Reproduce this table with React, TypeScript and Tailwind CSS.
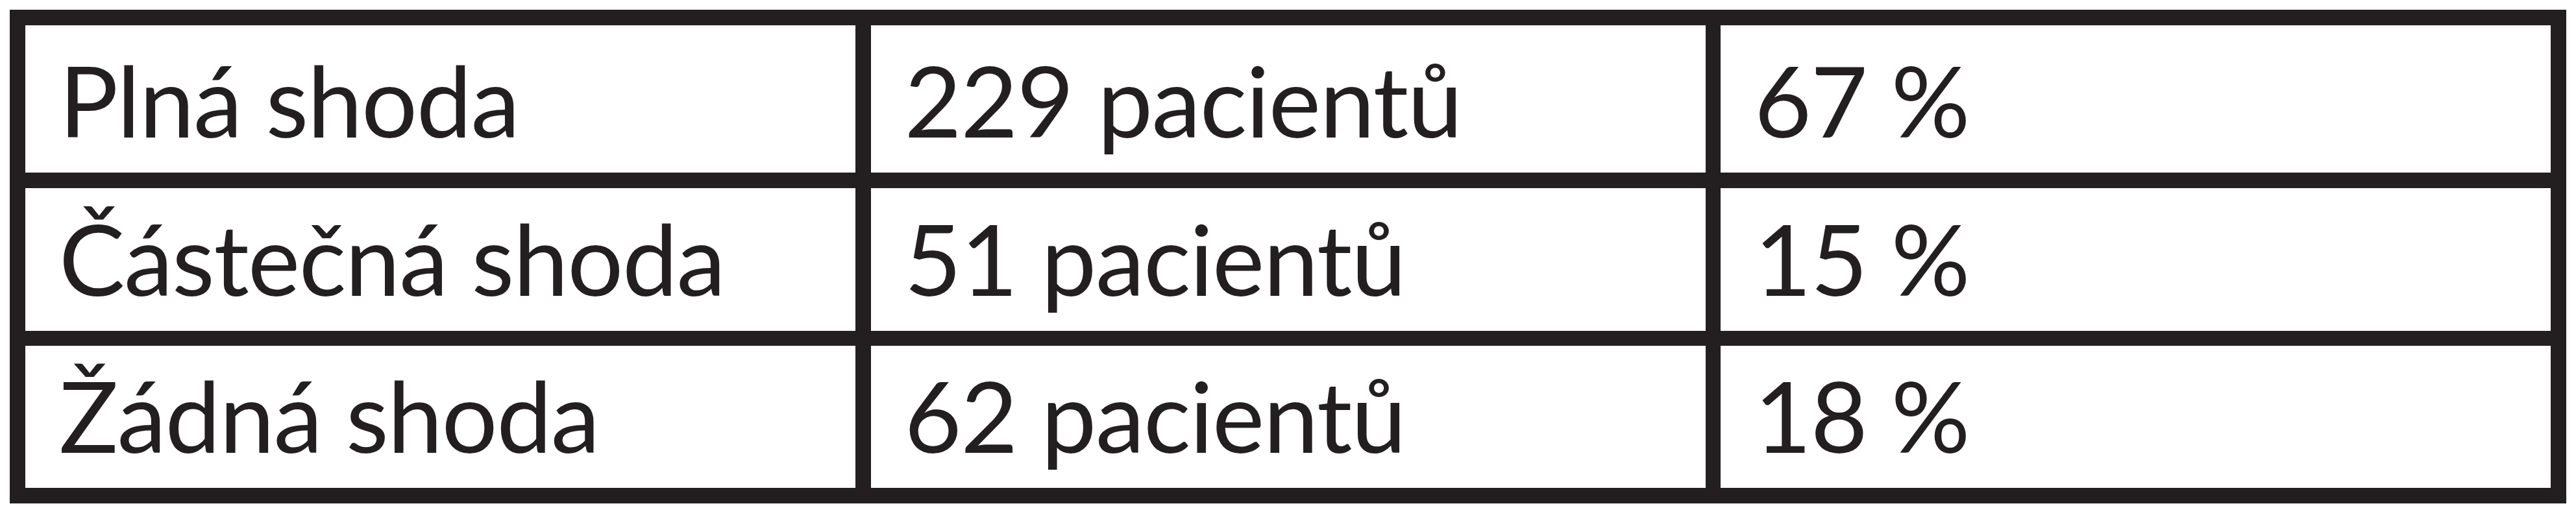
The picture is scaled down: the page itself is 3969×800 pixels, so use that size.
const rows = [
  ["Plná shoda", "229 pacientů", "67 %"],
  ["Částečná shoda", "51 pacientů", "15 %"],
  ["Žádná shoda", "62 pacientů", "18 %"],
];

const App = () => {
  return (
    <div className="bg-white w-[3969px] h-[800px] pt-[15px] pl-[15px]">
      <div className="w-[3939px] bg-[#231f20] p-[24px] grid grid-cols-[1279px_1286px_1279px] grid-rows-[227px_220px_219px] gap-x-[23.5px] gap-y-[23.5px]">
        {rows.flat().map((text, i) => (
          <div
            key={i}
            className="bg-white flex items-end pl-[52px] pb-[37px] text-[#231f20] text-[152px] tracking-[-1.5px] leading-none font-['Lato',sans-serif] whitespace-nowrap"
          >
            {text}
          </div>
        ))}
      </div>
    </div>
  );
};

export default App;
